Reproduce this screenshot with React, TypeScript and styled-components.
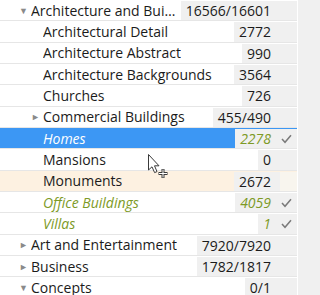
import styled, { createGlobalStyle } from "styled-components";

const Global = createGlobalStyle`
  html, body { margin: 0; padding: 0; background: #ffffff; }
  body { font-family: "Open Sans", "Noto Sans", sans-serif; }
`;

const Page = styled.div`
  position: relative;
  width: 320px;
  height: 295px;
  overflow: hidden;
  display: flex;
  background: #ffffff;
`;

const Tree = styled.div`
  width: 297px;
  display: flex;
  flex-direction: column;
`;

const Strip = styled.div`
  flex: 1;
  margin-left: 1px;
  background: #f0f0f0;
`;

const Row = styled.div<{ $bg?: string }>`
  box-sizing: border-box;
  height: 21.33px;
  flex: none;
  display: flex;
  align-items: stretch;
  border-bottom: 1px solid #e6e6e6;
  background: ${({ $bg }) => $bg || "transparent"};
`;

const Label = styled.div<{ $indent: number; $tone: string; $italic?: boolean }>`
  flex: 1;
  min-width: 0;
  display: flex;
  align-items: center;
  padding-left: ${({ $indent }) => $indent}px;
  color: ${({ $tone }) => $tone};
  font-style: ${({ $italic }) => ($italic ? "italic" : "normal")};
  font-size: 14px;
  white-space: nowrap;
`;

const Arrow = styled.span`
  flex: none;
  width: 12px;
  font-size: 9px;
  color: #8a8a8a;
`;

const Text = styled.span`
  overflow: hidden;
  text-overflow: ellipsis;
  margin-right: 2px;
`;

const Count = styled.div<{ $tone: string; $italic?: boolean }>`
  flex: none;
  display: flex;
  align-items: center;
  justify-content: flex-end;
  margin: 1px 0 0;
  padding: 0 9px 0 5px;
  background: #f0f0f0;
  color: ${({ $tone }) => $tone};
  font-style: ${({ $italic }) => ($italic ? "italic" : "normal")};
  font-size: 14px;
`;

const Check = styled.div<{ $bg: string }>`
  flex: none;
  width: 17px;
  margin-top: 1px;
  display: flex;
  align-items: center;
  padding-left: 1px;
  box-sizing: border-box;
  background: ${({ $bg }) => $bg};
`;

const Cursor = styled.svg`
  position: absolute;
  left: 147px;
  top: 153px;
`;

type Item = {
  label: string;
  count: string;
  depth: number;
  arrow?: "open" | "closed";
  state?: "sel" | "done" | "hover";
  checked?: boolean;
};

const items: Item[] = [
  { label: "Architecture and Buildings", count: "16566/16601", depth: 0, arrow: "open" },
  { label: "Architectural Detail", count: "2772", depth: 1 },
  { label: "Architecture Abstract", count: "990", depth: 1 },
  { label: "Architecture Backgrounds", count: "3564", depth: 1 },
  { label: "Churches", count: "726", depth: 1 },
  { label: "Commercial Buildings", count: "455/490", depth: 1, arrow: "closed" },
  { label: "Homes", count: "2278", depth: 1, state: "sel", checked: true },
  { label: "Mansions", count: "0", depth: 1 },
  { label: "Monuments", count: "2672", depth: 1, state: "hover" },
  { label: "Office Buildings", count: "4059", depth: 1, state: "done", checked: true },
  { label: "Villas", count: "1", depth: 1, state: "done", checked: true },
  { label: "Art and Entertainment", count: "7920/7920", depth: 0, arrow: "closed" },
  { label: "Business", count: "1782/1817", depth: 0, arrow: "closed" },
  { label: "Concepts", count: "0/1", depth: 0, arrow: "open" },
];

const GREEN = "#7d9a26";

function CheckMark() {
  return (
    <svg width="11" height="10" viewBox="0 0 11 10">
      <path d="M1 5 L4 8.3 L10 1.2" fill="none" stroke="#7a7a7a" strokeWidth="1.5" />
    </svg>
  );
}

export default function App() {
  return (
    <Page>
      <Global />
      <Tree>
        {items.map((it) => {
          const sel = it.state === "sel";
          const done = it.state === "done";
          const rowBg = sel ? "#3c97f4" : it.state === "hover" ? "#fdf1e1" : undefined;
          const labelTone = sel ? "#ffffff" : done ? GREEN : "#1b1b1b";
          const hasArrow = Boolean(it.arrow);
          const indent = it.depth === 0 ? 19 : hasArrow ? 31 : 43;
          return (
            <Row key={it.label} $bg={rowBg}>
              <Label $indent={indent} $tone={labelTone} $italic={sel || done}>
                {hasArrow && <Arrow>{it.arrow === "open" ? "▼" : "►"}</Arrow>}
                <Text>{it.label}</Text>
              </Label>
              <Count $tone={sel || done ? GREEN : "#1b1b1b"} $italic={sel || done}>
                {it.count}
              </Count>
              <Check $bg={it.state === "hover" ? "#f8f5ee" : "#f0f0f0"}>
                {it.checked && <CheckMark />}
              </Check>
            </Row>
          );
        })}
      </Tree>
      <Strip />
      <Cursor width="24" height="28" viewBox="0 0 24 28">
        <path d="M1.5 1.5 L1.5 17 L5 13.8 L7.6 19.6 L10 18.6 L7.5 12.8 L12 12.8 Z" fill="#ffffff" stroke="#3a3a3a" strokeWidth="1" />
        <path d="M16 16 v9 M11.5 20.5 h9" stroke="#3a3a3a" strokeWidth="3" />
        <path d="M16 16.5 v8 M12 20.5 h8" stroke="#ffffff" strokeWidth="1" />
      </Cursor>
    </Page>
  );
}
